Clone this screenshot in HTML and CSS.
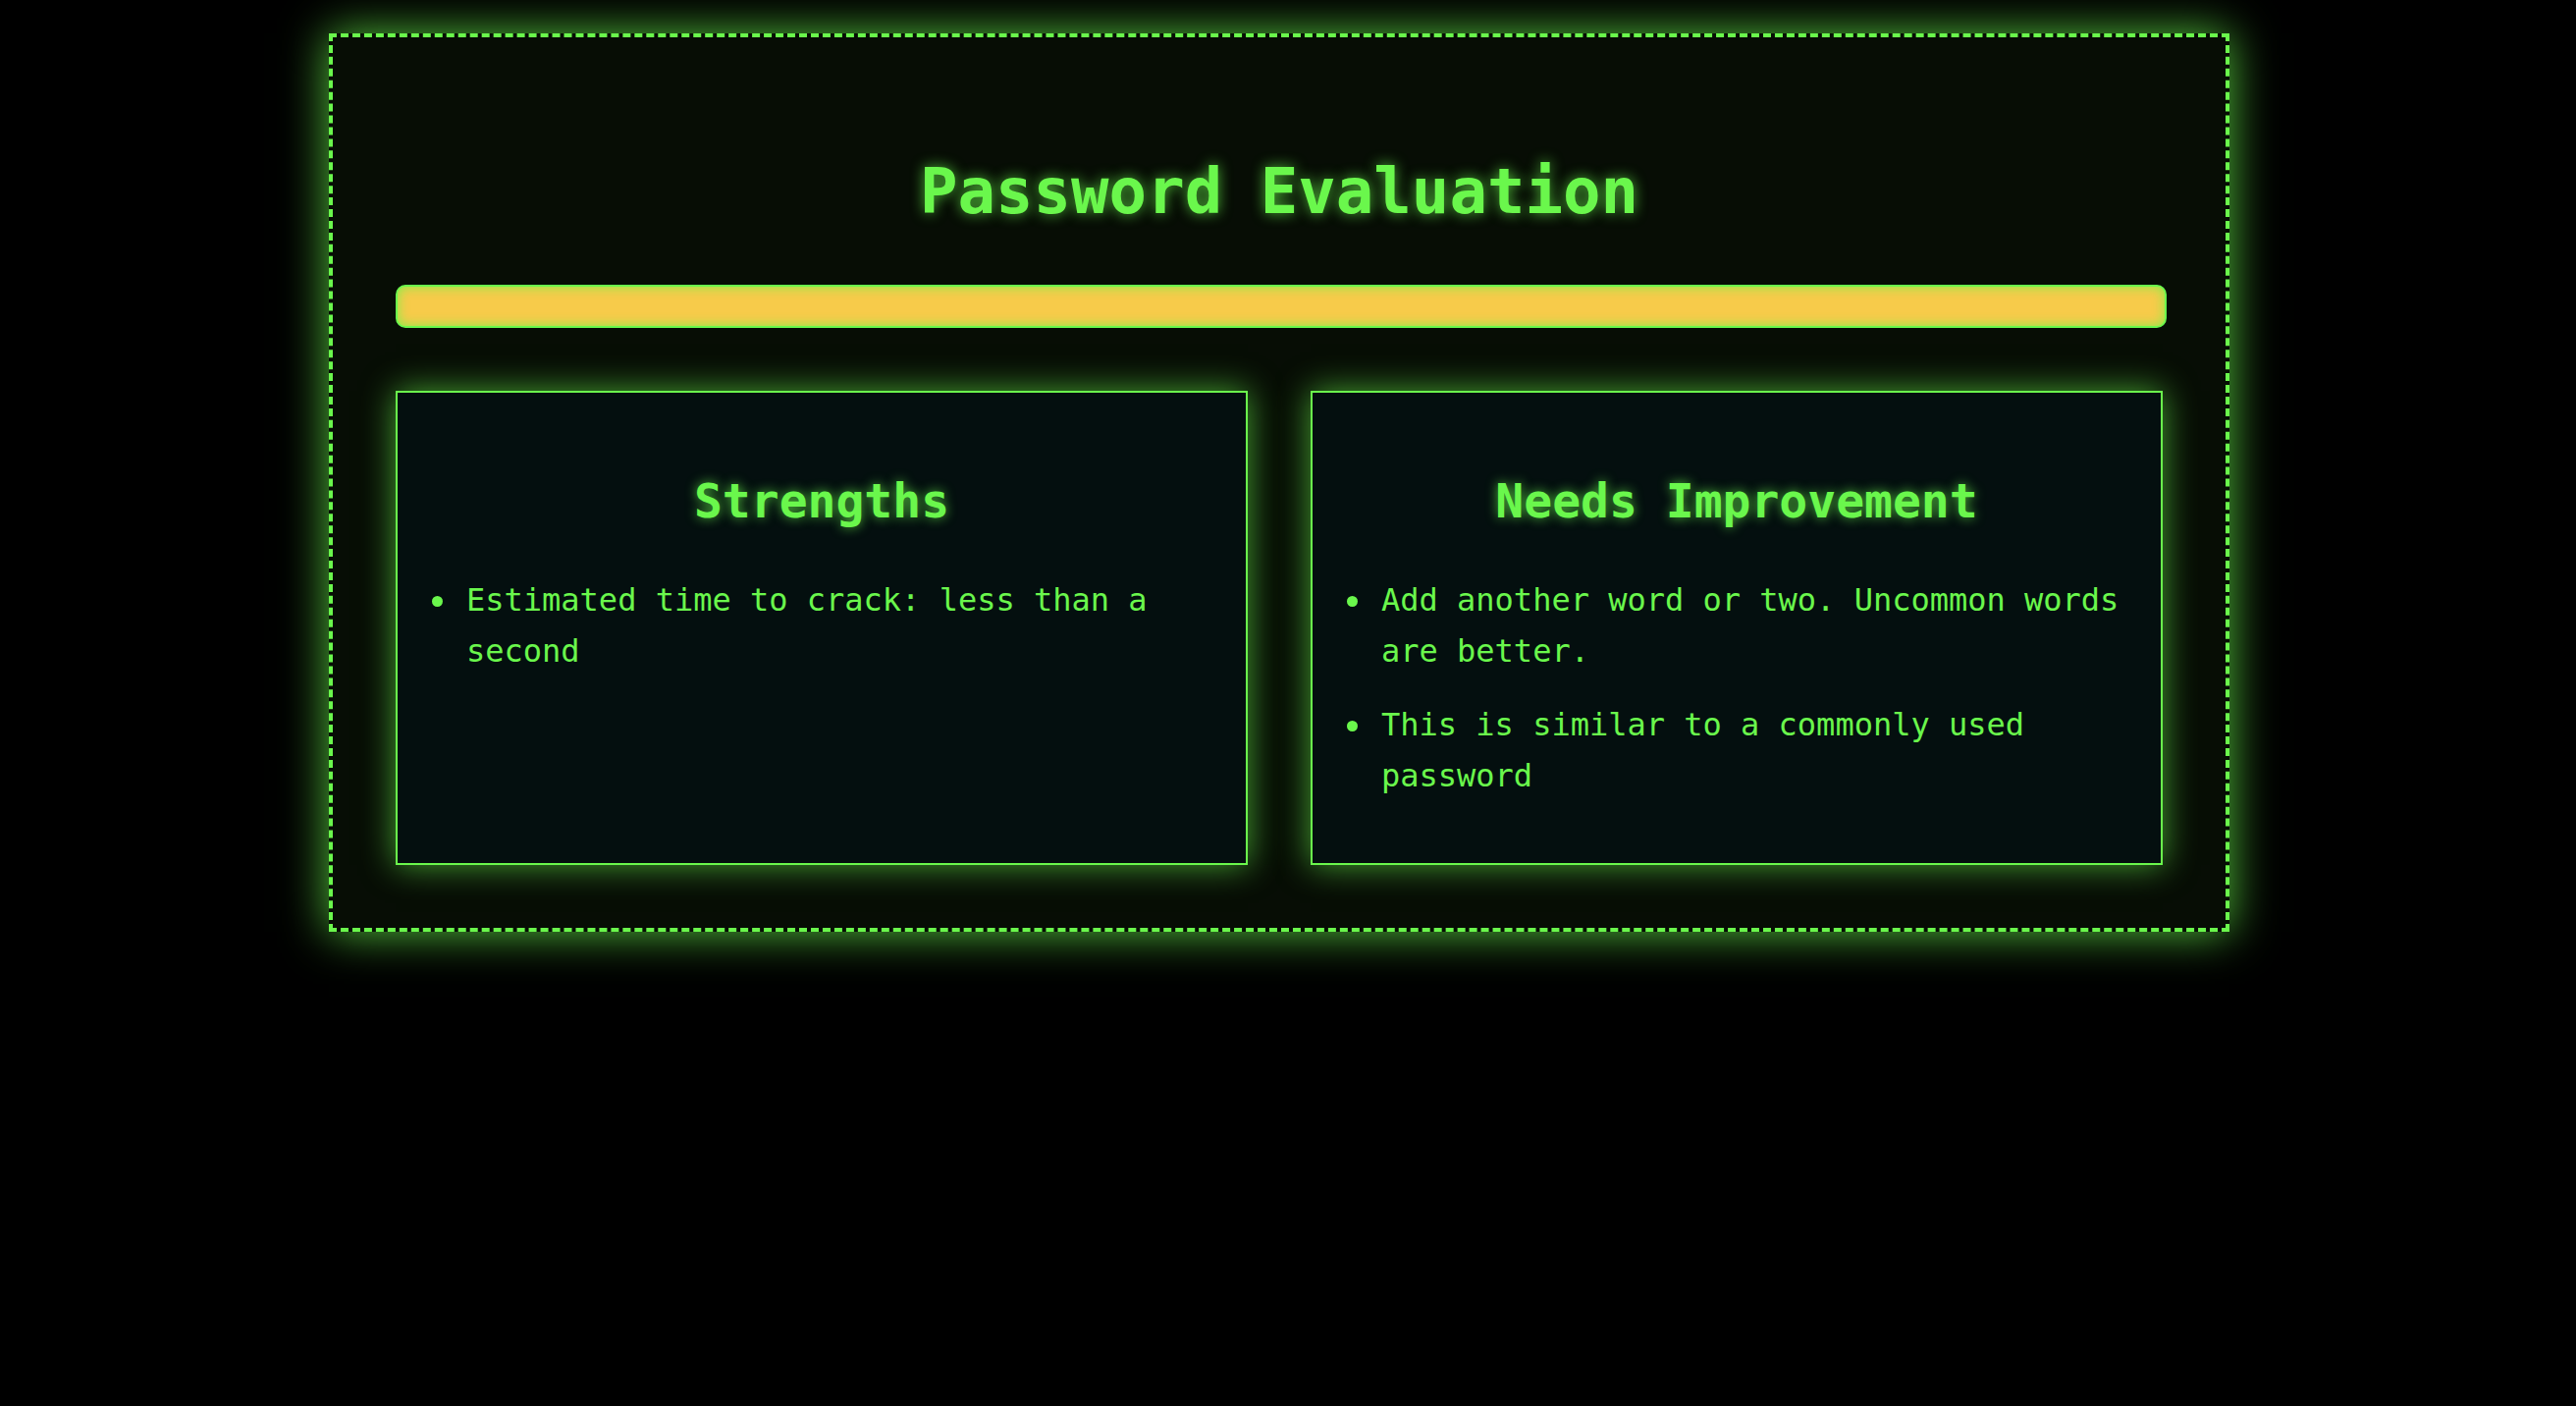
FILE: index.html
```html
<!DOCTYPE html>
<html lang="en">
<head>
<meta charset="utf-8">
<title>Password Evaluation</title>
<link rel="stylesheet" href="styles.css">
</head>
<body>
<main class="panel">
  <h1 class="title">Password Evaluation</h1>
  <div class="meter"><div class="meter-fill"></div></div>
  <div class="cards">
    <section class="card">
      <h2 class="card-title">Strengths</h2>
      <ul class="card-list">
        <li>Estimated time to crack: less than a second</li>
      </ul>
    </section>
    <section class="card">
      <h2 class="card-title">Needs Improvement</h2>
      <ul class="card-list">
        <li>Add another word or two. Uncommon words are better.</li>
        <li>This is similar to a commonly used password</li>
      </ul>
    </section>
  </div>
</main>
</body>
</html>
```

FILE: styles.css
```css
html, body {
  margin: 0;
  padding: 0;
  background: #000;
}

body {
  font-family: "DejaVu Sans Mono", "Liberation Mono", monospace;
  color: #6af74c;
  min-height: 1432px;
}

.panel {
  box-sizing: border-box;
  width: 1936px;
  margin: 34px 0 0 335px;
  padding: 64px;
  border: 4px dashed #6af74c;
  background: #070d05;
  box-shadow: 0 0 44px rgba(106, 247, 76, 0.8);
}

.title {
  margin: 56px 0 58px;
  font-size: 64px;
  line-height: 74px;
  font-weight: bold;
  text-align: center;
  color: #6af74c;
  text-shadow: 0 0 14px rgba(106, 247, 76, 0.75);
}

.meter {
  height: 40px;
  margin-right: -4px;
  border: 2px solid #6af74c;
  border-radius: 10px;
  background: #f7cb4a;
  box-shadow: inset 0 0 12px rgba(106, 247, 76, 0.85);
  overflow: hidden;
}

.meter-fill {
  height: 100%;
  width: 100%;
}

.cards {
  margin-top: 64px;
  display: grid;
  grid-template-columns: 1fr 1fr;
  gap: 64px;
}

.card {
  padding: 40px;
  border: 2px solid #6af74c;
  background: #040f0f;
  box-shadow: 0 0 32px rgba(106, 247, 76, 0.65);
}

.card-title {
  margin: 42px 0 47px;
  font-size: 48px;
  line-height: 56px;
  font-weight: bold;
  text-align: center;
  color: #6af74c;
  text-shadow: 0 0 12px rgba(106, 247, 76, 0.75);
}

.card-list {
  margin: 0;
  padding-left: 30px;
  font-size: 32px;
  line-height: 52px;
  list-style: none;
}

.card-list li {
  margin-bottom: 23px;
}

.card-list li::before {
  content: "";
  display: inline-block;
  width: 11px;
  height: 11px;
  margin-left: -35px;
  margin-right: 24px;
  border-radius: 50%;
  background: currentColor;
  vertical-align: 4px;
}
```
